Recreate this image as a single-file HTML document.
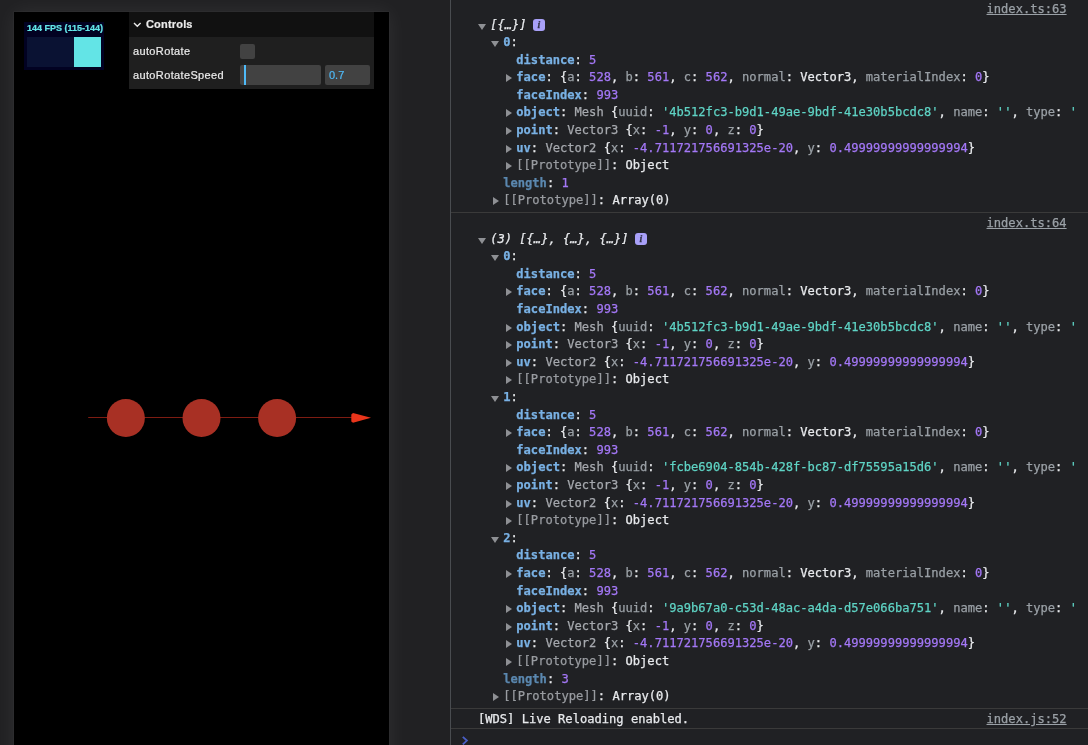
<!DOCTYPE html>
<html lang="en">
<head>
<meta charset="utf-8">
<title>Raycaster demo</title>
<style>
html,body{margin:0;padding:0;}
body{width:1088px;height:745px;overflow:hidden;background:#202124;position:relative;font-family:"Liberation Sans",sans-serif;}
#left{position:absolute;left:0;top:0;width:450px;height:745px;overflow:hidden;background:#212123;}
#screen{position:absolute;left:14px;top:12px;width:375px;height:760px;background:#000;box-shadow:0 0 0 0.5px rgba(255,255,255,0.05),0 0 20px rgba(255,255,255,0.07);}
#stats{position:absolute;left:10px;top:10px;width:80px;height:48px;background:#020222;}
#stats .t{position:absolute;left:3.1px;top:1px;font:bold 9px "Liberation Sans",sans-serif;color:#63e6e8;white-space:nowrap;line-height:11px;letter-spacing:0px;}
#stats .g{position:absolute;left:3px;top:15px;width:74px;height:30px;background:#0a1233;}
#stats .g i{position:absolute;right:0;top:0;width:27px;height:30px;background:#63e4e6;}
/* lil-gui */
#gui{position:absolute;left:115px;top:0;width:245px;background:#1f1f1f;color:#ebebeb;font:11px/1 "Liberation Sans",sans-serif;}
#gui .title{height:25px;line-height:25px;background:#111;font-weight:bold;padding:0 4px 0 17px;position:relative;letter-spacing:0.18px;}
#gui .title svg{position:absolute;left:4.2px;top:9.6px;}
#gui .ctl{display:flex;align-items:center;height:20px;margin:4px 0;padding:0 4px;}
#gui .name{letter-spacing:0.36px;width:45%;flex-shrink:0;box-sizing:border-box;padding-right:4px;line-height:20px;white-space:nowrap;}
#gui .widget{flex:1;display:flex;align-items:center;min-height:20px;}
#gui .cb{width:15px;height:15px;background:#424242;border-radius:2px;}
#gui .slider{flex:1;height:20px;background:#424242;border-radius:2px;position:relative;overflow:hidden;}
#gui .fill{position:absolute;left:0;top:0;height:100%;width:4.3px;border-right:2px solid #4fbaf7;}
#gui .num{margin-left:4px;width:45px;height:20px;background:#424242;border-radius:2px;color:#4fbaf7;box-sizing:border-box;padding:0 3.6px;line-height:21px;flex-shrink:0;}
.ga{display:inline-block;will-change:transform;-webkit-text-stroke:0.2px currentColor;}
/* scene */
#scene{position:absolute;left:0;top:0;}
/* devtools */
#dev{position:absolute;left:450px;top:0;width:638px;height:745px;background:transparent;will-change:transform;border-left:1px solid #494c50;box-sizing:border-box;overflow:hidden;
 font-family:"DejaVu Sans Mono","Liberation Mono",monospace;font-size:12.1px;color:#e8eaed;-webkit-text-stroke:0.25px currentColor;}
.row{position:absolute;white-space:pre;line-height:17.6px;height:17.6px;}
.sep{position:absolute;left:0;right:0;height:1px;background:#3a3a3a;}
.anchor{position:absolute;right:21.4px;white-space:pre;line-height:17.6px;color:#9aa0a6;text-decoration:underline;}
b.n{color:#79b1e4;font-weight:bold;}
b.nd{color:#5b88b0;font-weight:bold;}
.k{color:#9aa0a6;}
.v{color:#a478f7;}
.s{color:#5fd4c5;}
.c{color:#a6a9ae;}
.d{color:#999ca1;}
i.hd{font-style:oblique;color:#e8eaed;}
.info{display:inline-block;width:12px;height:12px;border-radius:3px;background:#a8a0f8;vertical-align:-2px;margin-left:6.3px;position:relative;}
.info i{position:absolute;left:0;top:0;width:12px;text-align:center;font:italic bold 10px/12px "Liberation Serif",serif;color:#33334a;}
.ad,.ar{position:absolute;width:0;height:0;}
.ad{left:-11.8px;top:6.4px;border-left:4.2px solid transparent;border-right:4.2px solid transparent;border-top:6.3px solid #8e9094;}
.ar{left:-10.5px;top:5.3px;border-top:4.3px solid transparent;border-bottom:4.3px solid transparent;border-left:6.4px solid #8e9094;}
</style>
</head>
<body>
<div id="left">
  <div id="screen">
    <svg id="scene" width="375" height="733" viewBox="14 12 375 733">
      <line x1="88.2" y1="417.5" x2="352" y2="417.5" stroke="#7e1c12" stroke-width="1"/>
      <circle cx="125.85" cy="418" r="19" fill="#a83024"/>
      <circle cx="201.5" cy="418" r="19" fill="#a83024"/>
      <circle cx="277.1" cy="418" r="19" fill="#a83024"/>
      <polygon points="351.3,414.4 353,413.1 371,417.8 353,422.7 351.3,421.4" fill="#e9351b"/>
    </svg>
    <div id="stats"><div class="t"><span class="ga">144 FPS (115-144)</span></div><div class="g"><i></i></div></div>
    <div id="gui">
      <div class="title"><svg width="9" height="6" viewBox="0 0 9 6"><path d="M1 1 L4.3 4.2 L7.6 1" fill="none" stroke="#ebebeb" stroke-width="1.4"/></svg><span class="ga">Controls</span></div>
      <div class="ctl"><div class="name"><span class="ga">autoRotate</span></div><div class="widget"><div class="cb"></div></div></div>
      <div class="ctl"><div class="name"><span class="ga">autoRotateSpeed</span></div><div class="widget"><div class="slider"><div class="fill"></div></div><div class="num"><span class="ga">0.7</span></div></div></div>
    </div>
  </div>
</div>
<div id="dev">
  <div class="anchor" style="top:1.2px">index.ts:63</div>
<div class="row" style="top:17.20px;left:39.2px"><span class="ad"></span><i class="hd">[{…}]</i><span class="info"><i>i</i></span></div>
<div class="row" style="top:34.20px;left:52.2px"><span class="ad"></span><b class="n">0</b>:</div>
<div class="row" style="top:52.20px;left:65.3px"><b class="n">distance</b>: <span class="v">5</span></div>
<div class="row" style="top:69.20px;left:65.3px"><span class="ar"></span><b class="n">face</b>: {<span class="k">a</span>: <span class="v">528</span>, <span class="k">b</span>: <span class="v">561</span>, <span class="k">c</span>: <span class="v">562</span>, <span class="k">normal</span>: Vector3, <span class="k">materialIndex</span>: <span class="v">0</span>}</div>
<div class="row" style="top:87.20px;left:65.3px"><b class="n">faceIndex</b>: <span class="v">993</span></div>
<div class="row" style="top:104.20px;left:65.3px"><span class="ar"></span><b class="n">object</b>: <span class="c">Mesh</span> {<span class="k">uuid</span>: <span class="s">'4b512fc3-b9d1-49ae-9bdf-41e30b5bcdc8'</span>, <span class="k">name</span>: <span class="s">''</span>, <span class="k">type</span>: <span class="s">'</span></div>
<div class="row" style="top:122.20px;left:65.3px"><span class="ar"></span><b class="n">point</b>: <span class="c">Vector3</span> {<span class="k">x</span>: <span class="v">-1</span>, <span class="k">y</span>: <span class="v">0</span>, <span class="k">z</span>: <span class="v">0</span>}</div>
<div class="row" style="top:140.20px;left:65.3px"><span class="ar"></span><b class="n">uv</b>: <span class="c">Vector2</span> {<span class="k">x</span>: <span class="v">-4.711721756691325e-20</span>, <span class="k">y</span>: <span class="v">0.49999999999999994</span>}</div>
<div class="row" style="top:157.20px;left:65.3px"><span class="ar"></span><span class="d">[[Prototype]]</span>: Object</div>
<div class="row" style="top:175.20px;left:52.2px"><b class="nd">length</b>: <span class="v">1</span></div>
<div class="row" style="top:192.20px;left:52.2px"><span class="ar"></span><span class="d">[[Prototype]]</span>: Array(0)</div>
  <div class="sep" style="top:212px"></div>
  <div class="anchor" style="top:215.2px">index.ts:64</div>
<div class="row" style="top:231.20px;left:39.2px"><span class="ad"></span><i class="hd">(3) [{…}, {…}, {…}]</i><span class="info"><i>i</i></span></div>
<div class="row" style="top:248.20px;left:52.2px"><span class="ad"></span><b class="n">0</b>:</div>
<div class="row" style="top:266.20px;left:65.3px"><b class="n">distance</b>: <span class="v">5</span></div>
<div class="row" style="top:283.20px;left:65.3px"><span class="ar"></span><b class="n">face</b>: {<span class="k">a</span>: <span class="v">528</span>, <span class="k">b</span>: <span class="v">561</span>, <span class="k">c</span>: <span class="v">562</span>, <span class="k">normal</span>: Vector3, <span class="k">materialIndex</span>: <span class="v">0</span>}</div>
<div class="row" style="top:301.20px;left:65.3px"><b class="n">faceIndex</b>: <span class="v">993</span></div>
<div class="row" style="top:319.20px;left:65.3px"><span class="ar"></span><b class="n">object</b>: <span class="c">Mesh</span> {<span class="k">uuid</span>: <span class="s">'4b512fc3-b9d1-49ae-9bdf-41e30b5bcdc8'</span>, <span class="k">name</span>: <span class="s">''</span>, <span class="k">type</span>: <span class="s">'</span></div>
<div class="row" style="top:336.20px;left:65.3px"><span class="ar"></span><b class="n">point</b>: <span class="c">Vector3</span> {<span class="k">x</span>: <span class="v">-1</span>, <span class="k">y</span>: <span class="v">0</span>, <span class="k">z</span>: <span class="v">0</span>}</div>
<div class="row" style="top:354.20px;left:65.3px"><span class="ar"></span><b class="n">uv</b>: <span class="c">Vector2</span> {<span class="k">x</span>: <span class="v">-4.711721756691325e-20</span>, <span class="k">y</span>: <span class="v">0.49999999999999994</span>}</div>
<div class="row" style="top:371.20px;left:65.3px"><span class="ar"></span><span class="d">[[Prototype]]</span>: Object</div>
<div class="row" style="top:389.20px;left:52.2px"><span class="ad"></span><b class="n">1</b>:</div>
<div class="row" style="top:407.20px;left:65.3px"><b class="n">distance</b>: <span class="v">5</span></div>
<div class="row" style="top:424.20px;left:65.3px"><span class="ar"></span><b class="n">face</b>: {<span class="k">a</span>: <span class="v">528</span>, <span class="k">b</span>: <span class="v">561</span>, <span class="k">c</span>: <span class="v">562</span>, <span class="k">normal</span>: Vector3, <span class="k">materialIndex</span>: <span class="v">0</span>}</div>
<div class="row" style="top:442.20px;left:65.3px"><b class="n">faceIndex</b>: <span class="v">993</span></div>
<div class="row" style="top:459.20px;left:65.3px"><span class="ar"></span><b class="n">object</b>: <span class="c">Mesh</span> {<span class="k">uuid</span>: <span class="s">'fcbe6904-854b-428f-bc87-df75595a15d6'</span>, <span class="k">name</span>: <span class="s">''</span>, <span class="k">type</span>: <span class="s">'</span></div>
<div class="row" style="top:477.20px;left:65.3px"><span class="ar"></span><b class="n">point</b>: <span class="c">Vector3</span> {<span class="k">x</span>: <span class="v">-1</span>, <span class="k">y</span>: <span class="v">0</span>, <span class="k">z</span>: <span class="v">0</span>}</div>
<div class="row" style="top:495.20px;left:65.3px"><span class="ar"></span><b class="n">uv</b>: <span class="c">Vector2</span> {<span class="k">x</span>: <span class="v">-4.711721756691325e-20</span>, <span class="k">y</span>: <span class="v">0.49999999999999994</span>}</div>
<div class="row" style="top:512.20px;left:65.3px"><span class="ar"></span><span class="d">[[Prototype]]</span>: Object</div>
<div class="row" style="top:530.20px;left:52.2px"><span class="ad"></span><b class="n">2</b>:</div>
<div class="row" style="top:547.20px;left:65.3px"><b class="n">distance</b>: <span class="v">5</span></div>
<div class="row" style="top:565.20px;left:65.3px"><span class="ar"></span><b class="n">face</b>: {<span class="k">a</span>: <span class="v">528</span>, <span class="k">b</span>: <span class="v">561</span>, <span class="k">c</span>: <span class="v">562</span>, <span class="k">normal</span>: Vector3, <span class="k">materialIndex</span>: <span class="v">0</span>}</div>
<div class="row" style="top:583.20px;left:65.3px"><b class="n">faceIndex</b>: <span class="v">993</span></div>
<div class="row" style="top:600.20px;left:65.3px"><span class="ar"></span><b class="n">object</b>: <span class="c">Mesh</span> {<span class="k">uuid</span>: <span class="s">'9a9b67a0-c53d-48ac-a4da-d57e066ba751'</span>, <span class="k">name</span>: <span class="s">''</span>, <span class="k">type</span>: <span class="s">'</span></div>
<div class="row" style="top:618.20px;left:65.3px"><span class="ar"></span><b class="n">point</b>: <span class="c">Vector3</span> {<span class="k">x</span>: <span class="v">-1</span>, <span class="k">y</span>: <span class="v">0</span>, <span class="k">z</span>: <span class="v">0</span>}</div>
<div class="row" style="top:635.20px;left:65.3px"><span class="ar"></span><b class="n">uv</b>: <span class="c">Vector2</span> {<span class="k">x</span>: <span class="v">-4.711721756691325e-20</span>, <span class="k">y</span>: <span class="v">0.49999999999999994</span>}</div>
<div class="row" style="top:653.20px;left:65.3px"><span class="ar"></span><span class="d">[[Prototype]]</span>: Object</div>
<div class="row" style="top:671.20px;left:52.2px"><b class="nd">length</b>: <span class="v">3</span></div>
<div class="row" style="top:688.20px;left:52.2px"><span class="ar"></span><span class="d">[[Prototype]]</span>: Array(0)</div>
  <div class="sep" style="top:708px"></div>
  <div class="row" style="top:711.2px;left:27px">[WDS] Live Reloading enabled.</div>
  <div class="anchor" style="top:711.2px">index.js:52</div>
  <div class="sep" style="top:728.2px"></div>
  <svg style="position:absolute;left:9.6px;top:735px" width="10" height="10" viewBox="0 0 10 10"><path d="M1.8 1.8 L5.9 5.6 L1.8 9.4" fill="none" stroke="#4a5fc6" stroke-width="1.8"/></svg>
</div>
</body>
</html>
